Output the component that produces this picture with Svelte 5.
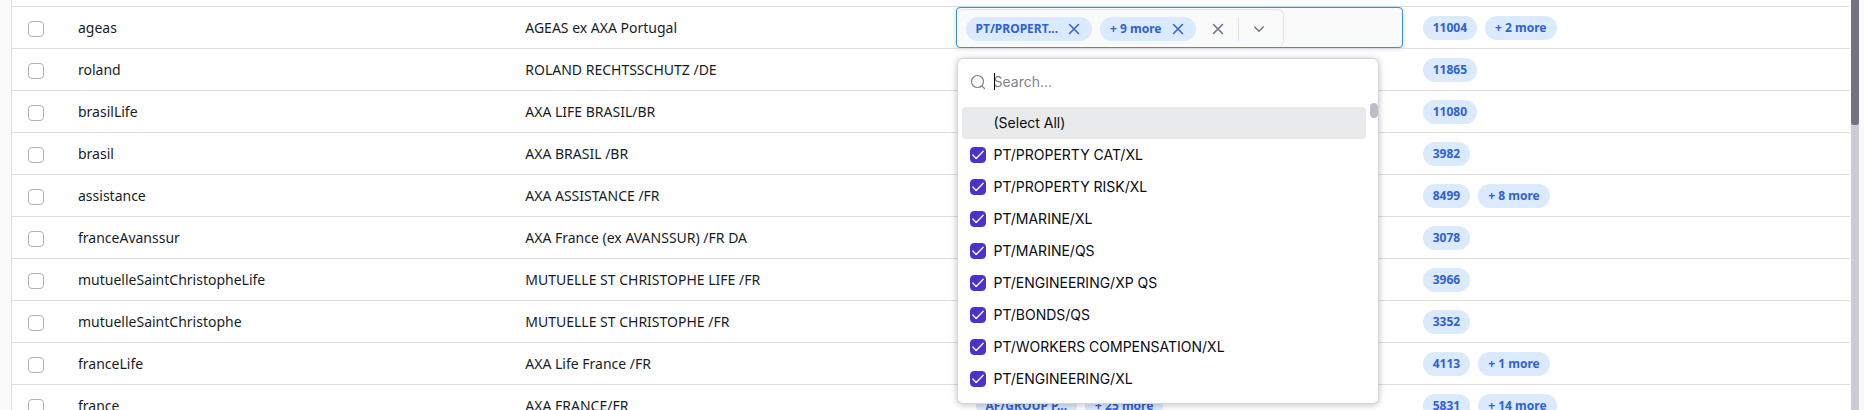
<script>
  const rows = [
    { key: 'ageas', name: 'AGEAS ex AXA Portugal', lines: ['PT/PROPERT...', '+ 9 more'], ids: ['11004', '+ 2 more'], editing: true },
    { key: 'roland', name: 'ROLAND RECHTSSCHUTZ /DE', lines: [], ids: ['11865'] },
    { key: 'brasilLife', name: 'AXA LIFE BRASIL/BR', lines: [], ids: ['11080'] },
    { key: 'brasil', name: 'AXA BRASIL /BR', lines: [], ids: ['3982'] },
    { key: 'assistance', name: 'AXA ASSISTANCE /FR', lines: [], ids: ['8499', '+ 8 more'] },
    { key: 'franceAvanssur', name: 'AXA France (ex AVANSSUR) /FR DA', lines: [], ids: ['3078'] },
    { key: 'mutuelleSaintChristopheLife', name: 'MUTUELLE ST CHRISTOPHE LIFE /FR', lines: [], ids: ['3966'] },
    { key: 'mutuelleSaintChristophe', name: 'MUTUELLE ST CHRISTOPHE /FR', lines: [], ids: ['3352'] },
    { key: 'franceLife', name: 'AXA Life France /FR', lines: [], ids: ['4113', '+ 1 more'] },
    { key: 'france', name: 'AXA FRANCE/FR', lines: ['AF/GROUP P...', '+ 25 more'], ids: ['5831', '+ 14 more'] }
  ];

  let options = $state(
    [
      'PT/PROPERTY CAT/XL',
      'PT/PROPERTY RISK/XL',
      'PT/MARINE/XL',
      'PT/MARINE/QS',
      'PT/ENGINEERING/XP QS',
      'PT/BONDS/QS',
      'PT/WORKERS COMPENSATION/XL',
      'PT/ENGINEERING/XL'
    ].map((label) => ({ label, checked: true }))
  );
  let query = $state('');

  function selectAll() {
    const next = !options.every((o) => o.checked);
    options.forEach((o) => (o.checked = next));
  }
</script>

{#snippet cross()}
  <svg width="16" height="16" viewBox="0 0 16 16" aria-hidden="true">
    <path d="M3.5 3.5l9 9M12.5 3.5l-9 9" fill="none" stroke="currentColor" stroke-width="1.5" stroke-linecap="round" />
  </svg>
{/snippet}

<div class="page">
  <div class="grid">
    <table>
      <colgroup>
        <col class="pick" />
        <col /><col /><col /><col />
      </colgroup>
      <tbody>
        {#each rows as row (row.key)}
          <tr>
            <td class="pick"><input type="checkbox" class="row-check" aria-label={`Select ${row.key}`} /></td>
            <td>{row.key}</td>
            <td>{row.name}</td>
            {#if row.editing}
              <td class="edit">
                <div class="editor">
                  <div class="control">
                    {#each row.lines as line}
                      <span class="chip">{line}<button class="icon" aria-label={`Remove ${line}`}>{@render cross()}</button></span>
                    {/each}
                    <div class="actions">
                      <button class="icon" aria-label="Clear">{@render cross()}</button>
                      <span class="divider"></span>
                      <button class="icon" aria-label="Toggle options">
                        <svg width="16" height="16" viewBox="0 0 16 16" aria-hidden="true">
                          <path d="M3.75 6l4.25 4.25L12.25 6" fill="none" stroke="currentColor" stroke-width="1.4" stroke-linecap="round" stroke-linejoin="round" />
                        </svg>
                      </button>
                    </div>
                  </div>
                </div>
                <div class="popover">
                  <label class="search">
                    <svg width="16" height="16" viewBox="0 0 16 16" aria-hidden="true">
                      <circle cx="7.5" cy="7.5" r="6" fill="none" stroke="currentColor" stroke-width="1.2" />
                      <path d="M11.8 11.8l2.7 2.7" stroke="currentColor" stroke-width="1.2" stroke-linecap="round" />
                    </svg>
                    <span class="field">
                      <input type="text" placeholder="Search..." aria-label="Search" bind:value={query} />
                    </span>
                  </label>
                  <div class="options">
                    <button class="option active" onclick={selectAll}><span class="blank"></span>(Select All)</button>
                    {#each options as option}
                      <label class="option">
                        <span class="tick">
                          <input type="checkbox" bind:checked={option.checked} />
                          <svg width="16" height="16" viewBox="0 0 16 16" aria-hidden="true">
                            <path d="M2.8 8l3.4 3.5 7-7.2" fill="none" stroke="#fff" stroke-width="1.3" stroke-linecap="round" stroke-linejoin="round" />
                          </svg>
                        </span>
                        {option.label}
                      </label>
                    {/each}
                    <span class="thumb"></span>
                  </div>
                </div>
              </td>
            {:else}
              <td><div class="chips">{#each row.lines as line}<span class="chip">{line}</span>{/each}</div></td>
            {/if}
            <td><div class="chips">{#each row.ids as id}<span class="chip">{id}</span>{/each}</div></td>
          </tr>
        {/each}
      </tbody>
    </table>
  </div>
  <div class="scrollbar"><div class="handle"></div></div>
</div>

<style>
  .page {
    display: flex;
    height: 100vh;
    overflow: hidden;
    box-sizing: border-box;
    padding: 0 5px 0 11px;
    background: #fafafa;
    color: #181d1f;
    font: 14px/20px 'Noto Sans', sans-serif;
  }
  .grid {
    flex: 1;
    padding: 6px 1px 0 0;
    border-left: 1px solid #dddfdf;
    background: #fff;
  }
  table {
    width: 100%;
    table-layout: fixed;
    border-collapse: separate;
    border-spacing: 0;
  }
  col.pick { width: 49px; }
  td {
    position: relative;
    box-sizing: border-box;
    height: 42px;
    padding: 0 17px;
    border-top: 1px solid #dddfdf;
    white-space: nowrap;
  }
  td.pick { padding: 3px 16px 0; }
  td.edit { padding: 0; }
  input, button { margin: 0; font: inherit; color: inherit; }
  button { padding: 0; border: 0; background: none; text-align: left; }

  .row-check {
    display: block;
    appearance: none;
    width: 16px;
    height: 16px;
    border: 1px solid #b0b2b3;
    border-radius: 4px;
    background: #fff;
  }

  .chips { display: flex; gap: 8px; padding-left: 3px; }
  .chip {
    display: flex;
    align-items: center;
    gap: 8px;
    height: 24px;
    padding: 0 10px;
    border-radius: 12px;
    background: #dbeafe;
    color: #2f62d2;
    font-size: 12px;
    font-weight: 700;
  }
  .icon { display: flex; }

  .editor {
    display: flex;
    box-sizing: border-box;
    height: 41px;
    border: 1px solid #3d8fd1;
    border-radius: 4px;
    background: #fafafa;
    box-shadow: 0 1px 4px rgba(33, 120, 200, 0.25);
  }
  .control {
    display: flex;
    align-items: center;
    gap: 8px;
    margin-top: 1px;
    padding: 0 16px 0 9px;
    border: 1px solid #e2e5e9;
    border-width: 1px 1px 0 0;
    border-radius: 6px;
  }
  .actions {
    display: flex;
    align-items: center;
    gap: 12px;
    margin-left: 6px;
    color: #6b7280;
  }
  .divider { width: 1px; height: 24px; background: #e2e5e9; }

  .popover {
    position: absolute;
    z-index: 2;
    top: 51px;
    left: 1px;
    width: 420px;
    border: 1px solid #d5d6d8;
    border-radius: 6px;
    background: #fff;
    box-shadow: 0 1px 6px rgba(0, 0, 0, 0.25);
    color: #0a0a14;
    font: 14px/32px Inter, sans-serif;
  }
  .search {
    display: flex;
    align-items: center;
    gap: 8px;
    height: 44px;
    padding: 1px 12px 3px;
    color: #80838a;
  }
  .field { position: relative; flex: 1; display: flex; }
  .field::before {
    content: '';
    position: absolute;
    left: 0;
    top: 7px;
    width: 1px;
    height: 17px;
    background: #000;
  }
  .field input {
    width: 100%;
    padding: 0;
    border: 0;
    outline: 0;
    background: none;
    color: #0a0a14;
  }
  .field input::placeholder { color: #80838a; }
  .options {
    position: relative;
    display: flex;
    flex-direction: column;
    padding: 0 12px 8px 4px;
  }
  .option {
    display: flex;
    align-items: center;
    gap: 8px;
    height: 32px;
    padding: 0 8px;
    border-radius: 4px;
  }
  .option.active { background: #e9eaeb; }
  .blank { width: 16px; }
  .tick { position: relative; display: flex; }
  .tick input {
    appearance: none;
    width: 16px;
    height: 16px;
    border: 1px solid #b0b2b3;
    border-radius: 4px;
  }
  .tick input:checked { border-color: #4a33cc; background: #4a33cc; }
  .tick svg { position: absolute; inset: 0; pointer-events: none; }
  .thumb {
    position: absolute;
    top: -4px;
    right: 0;
    width: 8px;
    height: 15px;
    border-radius: 4px;
    background: #c0bdcb;
  }

  .scrollbar { width: 8px; background: #cdccd2; }
  .handle { height: 125px; border-radius: 0 0 3px 3px; background: #75717f; }
</style>
